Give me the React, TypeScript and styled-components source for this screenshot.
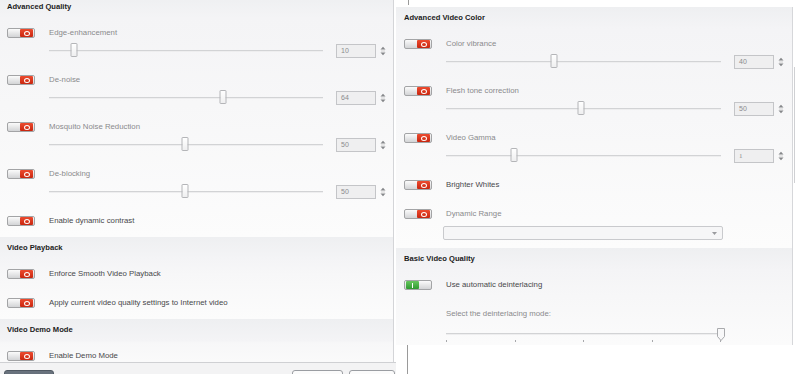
import React from "react";
import styled, { createGlobalStyle } from "styled-components";

const Global = createGlobalStyle`
  html, body { margin: 0; padding: 0; background: #ffffff; }
  body { font-family: "Liberation Sans", Arial, sans-serif; }
  #root { width: 800px; height: 374px; overflow: hidden; }
  * { box-sizing: border-box; }
`;

const Screen = styled.div`
  display: flex;
  width: 800px;
  height: 374px;
  overflow: hidden;
  background: #ffffff;
`;

/* ---------- left window ---------- */
const LeftColumn = styled.div`
  flex: none;
  width: 396px;
  display: flex;
  flex-direction: column;
`;

const LeftPane = styled.div`
  width: 394px;
  height: 362px;
  overflow: hidden;
  border-right: 1px solid #d4d5d8;
  background: #ffffff;
`;

const ScrolledStack = styled.div`
  display: flex;
  flex-direction: column;
  margin-top: -4px;
`;

const Footer = styled.div`
  flex: 1;
  display: flex;
  align-items: flex-start;
  gap: 6px;
  padding: 7px 1px 0 4px;
  overflow: hidden;
  border-top: 1px solid #cfd0d3;
  background: #f3f3f4;
`;

const FooterButton = styled.div<{ $dark?: boolean; $w: number }>`
  flex: none;
  width: ${(p) => p.$w}px;
  height: 20px;
  border-radius: 3px;
  border: 1px solid ${(p) => (p.$dark ? "#4f5862" : "#9a9da2")};
  background: ${(p) => (p.$dark ? "linear-gradient(#6a737e, #56606b)" : "#fbfbfb")};
`;

const FooterSpacer = styled.div`
  flex: 1;
`;

/* ---------- right window ---------- */
const RightColumn = styled.div`
  flex: none;
  width: 404px;
  display: flex;
  flex-direction: column;
`;

const TopStrip = styled.div`
  height: 7px;
  padding-left: 12px;
  background: #ffffff;
`;

const Notch = styled.div<{ $h: number }>`
  width: 1px;
  height: ${(p) => p.$h}px;
  background: #9a9a9a;
`;

const PanelRow = styled.div`
  display: flex;
  height: 338px;
`;

const RightPane = styled.div`
  width: 397px;
  height: 338px;
  overflow: hidden;
  border-right: 1px solid #d6d7da;
  background: #ffffff;
  display: flex;
  flex-direction: column;
`;

const ScrollTrack = styled.div`
  width: 7px;
  padding: 60px 0 0 1px;
  background: #ffffff;
`;

const ScrollThumb = styled.div`
  width: 2px;
  height: 116px;
  border-left: 1px solid #cfd0d3;
`;

const BottomStrip = styled.div`
  flex: 1;
  padding-left: 11px;
  background: #ffffff;
  display: flex;
`;

/* ---------- sections ---------- */
const Section = styled.section<{ $padL: number; $padR: number; $tail?: number }>`
  display: flex;
  flex-direction: column;
  padding: 0 ${(p) => p.$padR}px ${(p) => p.$tail ?? 10}px ${(p) => p.$padL}px;
  background: linear-gradient(180deg, #eeeff1 0px, #f4f4f6 22px, #f7f7f8 45%, #fcfcfc 100%);
`;

const SectionTitle = styled.h3`
  margin: 0;
  height: 22px;
  line-height: 22px;
  font-size: 7.6px;
  font-weight: 700;
  color: #1c1c1c;
`;

const RowList = styled.div`
  display: flex;
  flex-direction: column;
  gap: 17px;
  padding-top: 9px;
`;

const Row = styled.div`
  display: grid;
  grid-template-columns: 42px 1fr;
  align-items: start;
`;

const Content = styled.div`
  display: flex;
  flex-direction: column;
  min-width: 0;
`;

const Label = styled.div<{ $dim?: boolean }>`
  height: 12px;
  line-height: 12px;
  font-size: 7.8px;
  white-space: nowrap;
  color: ${(p) => (p.$dim ? "#8a8a8c" : "#48484a")};
`;

/* ---------- toggle ---------- */
const Switch = styled.span<{ $on?: boolean }>`
  display: flex;
  justify-content: ${(p) => (p.$on ? "flex-start" : "flex-end")};
  align-items: center;
  width: 28px;
  height: 10px;
  margin-top: 1px;
  padding: 0 1px;
  border: 1px solid #a3a4a6;
  border-radius: 2px;
  background: linear-gradient(#fbfbfb, #d3d4d6);
`;

const Knob = styled.span<{ $on?: boolean }>`
  display: flex;
  align-items: center;
  justify-content: center;
  width: 13px;
  height: 8px;
  border-radius: 1px;
  background: ${(p) =>
    p.$on ? "linear-gradient(#67c65f, #2f9a31)" : "linear-gradient(#ec4b2f, #c9260f)"};
`;

const Ring = styled.span`
  width: 6px;
  height: 5px;
  border: 1.3px solid #ffffff;
  border-radius: 50%;
`;

const Bar = styled.span`
  width: 1.5px;
  height: 5px;
  background: #ffffff;
`;

const Toggle = ({ on }: { on?: boolean }) => (
  <Switch $on={on}>
    <Knob $on={on}>{on ? <Bar /> : <Ring />}</Knob>
  </Switch>
);

/* ---------- slider + spin ---------- */
const SliderLine = styled.div`
  display: flex;
  align-items: center;
  height: 13px;
  margin-top: 5px;
`;

const Track = styled.div<{ $w?: number }>`
  position: relative;
  ${(p) => (p.$w ? `width: ${p.$w}px; flex: none;` : "flex: 1;")}
  height: 2px;
  background: #d2d3d5;
  border-bottom: 1px solid #eeeeef;
`;

const Thumb = styled.div`
  position: absolute;
  top: 50%;
  width: 7px;
  height: 14px;
  transform: translate(-50%, -50%);
  border: 1px solid #b4b5b8;
  border-radius: 1px;
  background: linear-gradient(#ffffff, #efeff0);
`;

const SpinBox = styled.div<{ $serif?: boolean }>`
  flex: none;
  width: 40px;
  height: 14px;
  margin-left: 13px;
  padding-left: 4px;
  line-height: 12px;
  font-size: 7px;
  font-family: ${(p) => (p.$serif ? '"Liberation Serif", serif' : '"Liberation Sans", Arial, sans-serif')};
  color: #8b8b8d;
  border: 1px solid #c4c5c8;
  background: #efeff0;
`;

const Arrows = styled.svg`
  flex: none;
  margin-left: 4px;
`;

const SpinArrows = () => (
  <Arrows width="6" height="10" viewBox="0 0 6 10">
    <path d="M0.5 3.6 L3 0.8 L5.5 3.6 Z" fill="#85878a" />
    <rect x="1" y="4.7" width="4" height="0.6" fill="#b8b9bb" />
    <path d="M0.5 6.4 L3 9.2 L5.5 6.4 Z" fill="#85878a" />
  </Arrows>
);

const Slider = ({ pos, value, serif }: { pos: number; value: string; serif?: boolean }) => (
  <SliderLine>
    <Track>
      <Thumb style={{ left: `${pos * 100}%` }} />
    </Track>
    <SpinBox $serif={serif}>{value}</SpinBox>
    <SpinArrows />
  </SliderLine>
);

/* ---------- select ---------- */
const Select = styled.div`
  display: flex;
  align-items: center;
  justify-content: flex-end;
  width: 280px;
  height: 14px;
  margin: 6px 0 0 -3px;
  padding-right: 5px;
  border: 1px solid #c9cacd;
  border-radius: 2px;
  background: #f6f6f7;
`;

const Caret = styled.svg`
  flex: none;
`;

/* ---------- tick slider ---------- */
const TickSlider = styled.div`
  display: flex;
  flex-direction: column;
  width: 275px;
  margin-top: 6px;
  padding-top: 7px;
  height: 20px;
`;

const Ticks = styled.div`
  display: flex;
  justify-content: space-between;
  margin-top: 5px;
`;

const Tick = styled.span`
  width: 1px;
  height: 2px;
  background: #a7a8ab;
`;

const PointerThumb = styled.svg`
  position: absolute;
  top: -5px;
  transform: translateX(-50%);
`;

/* ---------- data ---------- */
type RowDef =
  | { kind: "slider"; label: string; value: string; pos: number; serif?: boolean }
  | { kind: "toggle"; label: string; dim?: boolean; on?: boolean }
  | { kind: "select"; label: string };

const leftSections: { title: string; rows: RowDef[] }[] = [
  {
    title: "Advanced Quality",
    rows: [
      { kind: "slider", label: "Edge-enhancement", value: "10", pos: 0.091 },
      { kind: "slider", label: "De-noise", value: "64", pos: 0.636 },
      { kind: "slider", label: "Mosquito Noise Reduction", value: "50", pos: 0.496 },
      { kind: "slider", label: "De-blocking", value: "50", pos: 0.496 },
      { kind: "toggle", label: "Enable dynamic contrast" },
    ],
  },
  {
    title: "Video Playback",
    rows: [
      { kind: "toggle", label: "Enforce Smooth Video Playback" },
      { kind: "toggle", label: "Apply current video quality settings to Internet video" },
    ],
  },
  {
    title: "Video Demo Mode",
    rows: [{ kind: "toggle", label: "Enable Demo Mode" }],
  },
];

const colorRows: RowDef[] = [
  { kind: "slider", label: "Color vibrance", value: "40", pos: 0.393 },
  { kind: "slider", label: "Flesh tone correction", value: "50", pos: 0.491 },
  { kind: "slider", label: "Video Gamma", value: "1", pos: 0.247, serif: true },
  { kind: "toggle", label: "Brighter Whites" },
  { kind: "select", label: "Dynamic Range" },
];

const SettingRow = ({ row }: { row: RowDef }) => (
  <Row>
    <Toggle on={row.kind === "toggle" && row.on} />
    <Content>
      <Label $dim={row.kind !== "toggle" || row.dim}>{row.label}</Label>
      {row.kind === "slider" && <Slider pos={row.pos} value={row.value} serif={row.serif} />}
      {row.kind === "select" && (
        <Select>
          <Caret width="5" height="3" viewBox="0 0 5 3">
            <path d="M0 0 L5 0 L2.5 3 Z" fill="#9a9b9e" />
          </Caret>
        </Select>
      )}
    </Content>
  </Row>
);

export default function App() {
  return (
    <Screen>
      <Global />
      <LeftColumn>
        <LeftPane>
          <ScrolledStack>
            {leftSections.map((s) => (
              <Section key={s.title} $padL={7} $padR={7}>
                <SectionTitle>{s.title}</SectionTitle>
                <RowList>
                  {s.rows.map((r) => (
                    <SettingRow key={r.label} row={r} />
                  ))}
                </RowList>
              </Section>
            ))}
          </ScrolledStack>
        </LeftPane>
        <Footer>
          <FooterButton $dark $w={50} />
          <FooterSpacer />
          <FooterButton $w={51} />
          <FooterButton $w={46} />
        </Footer>
      </LeftColumn>

      <RightColumn>
        <TopStrip>
          <Notch $h={5} />
        </TopStrip>
        <PanelRow>
          <RightPane>
            <Section $padL={8} $padR={8} $tail={8}>
              <SectionTitle>Advanced Video Color</SectionTitle>
              <RowList>
                {colorRows.map((r) => (
                  <SettingRow key={r.label} row={r} />
                ))}
              </RowList>
            </Section>
            <Section $padL={8} $padR={8}>
              <SectionTitle>Basic Video Quality</SectionTitle>
              <RowList>
                <SettingRow row={{ kind: "toggle", label: "Use automatic deinterlacing", on: true }} />
                <Row>
                  <span />
                  <Content>
                    <Label $dim>Select the deinterlacing mode:</Label>
                    <TickSlider>
                      <Track $w={275}>
                        <PointerThumb width="8" height="13" viewBox="0 0 8 13" style={{ left: "100%" }}>
                          <path
                            d="M0.5 0.5 H7.5 V8.5 L4 12.5 L0.5 8.5 Z"
                            fill="#f8f8f9"
                            stroke="#a9aaad"
                          />
                        </PointerThumb>
                      </Track>
                      <Ticks>
                        <Tick />
                        <Tick />
                        <Tick />
                        <Tick />
                        <Tick />
                      </Ticks>
                    </TickSlider>
                  </Content>
                </Row>
              </RowList>
            </Section>
          </RightPane>
          <ScrollTrack>
            <ScrollThumb />
          </ScrollTrack>
        </PanelRow>
        <BottomStrip>
          <Notch $h={29} />
        </BottomStrip>
      </RightColumn>
    </Screen>
  );
}
